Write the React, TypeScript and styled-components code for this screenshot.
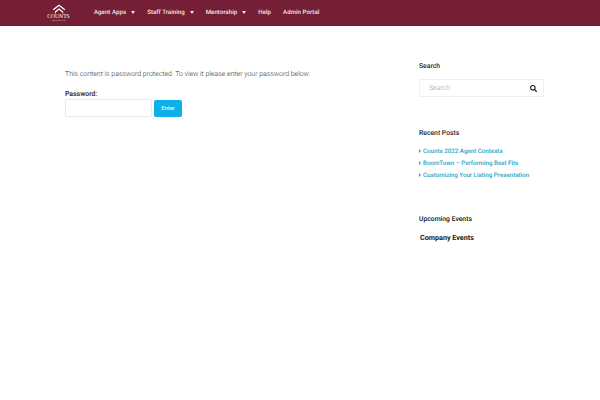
import React from "react";
import styled, { createGlobalStyle } from "styled-components";
import { FaSearch } from "react-icons/fa";

const GlobalStyle = createGlobalStyle`
  html, body {
    margin: 0;
    padding: 0;
    background: #fff;
    font-family: Roboto, "Liberation Sans", sans-serif;
    text-rendering: geometricPrecision;
    overflow: hidden;
  }
`;

const Page = styled.div`
  width: 600px;
  height: 400px;
  overflow: hidden;
`;

const Header = styled.header`
  height: 25px;
  background: #741f36;
  border-bottom: 1px solid #6a1a30;
  display: flex;
  align-items: center;
  padding-left: 47px;
`;

const Logo = styled.div`
  width: 23px;
  height: 25px;
  padding-top: 4px;
  box-sizing: border-box;
  display: flex;
  flex-direction: column;
  align-items: center;
  color: #fff;
`;

const LogoName = styled.span`
  font-family: "Liberation Serif", serif;
  font-size: 5.6px;
  line-height: 6px;
`;

const LogoSub = styled.span`
  font-family: "Liberation Sans", sans-serif;
  font-size: 2px;
  line-height: 2px;
  opacity: 0.7;
`;

const Nav = styled.nav`
  display: flex;
  align-items: center;
  margin-left: 24px;
  margin-top: -1px;
  gap: 12px;
`;

const NavItem = styled.a`
  display: flex;
  align-items: center;
  color: #f3e6ea;
  font-size: 6.1px;
  font-weight: 500;
  letter-spacing: 0.05px;
  white-space: nowrap;
`;

const Caret = styled.span`
  width: 0;
  height: 0;
  margin-left: 5px;
  border-left: 2.5px solid transparent;
  border-right: 2.5px solid transparent;
  border-top: 3px solid #f3e6ea;
`;

const Body = styled.div`
  display: flex;
  align-items: flex-start;
  padding-left: 65px;
`;

const Main = styled.main`
  width: 354px;
  padding-top: 43px;
`;

const Notice = styled.p`
  margin: 0;
  font-size: 6.95px;
  font-weight: 300;
  line-height: 11px;
  color: #333;
  white-space: nowrap;
`;

const Label = styled.label`
  display: block;
  margin-top: 9px;
  font-size: 6.9px;
  font-weight: 500;
  line-height: 10px;
  color: #222;
`;

const FormRow = styled.div`
  display: flex;
  align-items: center;
  gap: 2px;
`;

const PasswordInput = styled.input`
  box-sizing: border-box;
  width: 87px;
  height: 18px;
  padding: 0;
  border: 1px solid #e8e8e8;
  border-radius: 2px;
  background: #fff;
  outline: none;
`;

const Button = styled.button`
  width: 28px;
  height: 17px;
  padding: 0;
  border: none;
  border-radius: 2px;
  background: #0db1ea;
  color: #e4f6fd;
  font-family: Roboto, sans-serif;
  font-size: 5.8px;
  font-weight: 500;
`;

const Sidebar = styled.aside`
  width: 125px;
  padding-top: 35px;
`;

const WidgetTitle = styled.h4`
  margin: 0;
  font-size: 6.8px;
  font-weight: 500;
  line-height: 11px;
  color: #1d1d1d;
`;

const SearchBox = styled.div`
  box-sizing: border-box;
  display: flex;
  align-items: center;
  justify-content: space-between;
  height: 18px;
  margin-top: 7px;
  padding: 0 6px 0 9px;
  border: 1px solid #f0f0f0;
  color: #111;
`;

const Placeholder = styled.span`
  font-size: 6.9px;
  font-weight: 300;
  color: #999;
`;

const RecentTitle = styled(WidgetTitle)`
  margin-top: 31px;
`;

const PostList = styled.ul`
  list-style: none;
  margin: 6px 0 0;
  padding: 0;
  display: flex;
  flex-direction: column;
  gap: 1px;
`;

const PostItem = styled.li`
  display: flex;
  align-items: center;
  height: 11px;
  font-size: 6.2px;
  font-weight: 500;
  color: #2aa6c6;
  white-space: nowrap;
`;

const Arrow = styled.span`
  width: 0;
  height: 0;
  margin-right: 2px;
  border-top: 2px solid transparent;
  border-bottom: 2px solid transparent;
  border-left: 2px solid #2aa6c6;
`;

const EventsTitle = styled.h4`
  margin: 34px 0 0;
  font-family: Roboto, sans-serif;
  font-size: 6.8px;
  font-weight: 500;
  line-height: 11px;
  color: #111;
`;

const CompanyEvents = styled.h4`
  margin: 7px 0 0 1px;
  font-family: Roboto, sans-serif;
  font-size: 7.2px;
  font-weight: 700;
  line-height: 11px;
  color: #1a1a1a;
`;

const navItems = [
  { label: "Agent Apps", caret: true },
  { label: "Staff Training", caret: true },
  { label: "Mentorship", caret: true },
  { label: "Help", caret: false },
  { label: "Admin Portal", caret: false },
];

const posts = [
  "Counts 2022 Agent Contests",
  "BoomTown – Performing Best Fits",
  "Customizing Your Listing Presentation",
];

const App: React.FC = () => (
  <Page>
    <GlobalStyle />
    <Header>
      <Logo>
        <svg width="16" height="10" viewBox="0 0 18 12" fill="none" stroke="#fff">
          <path d="M2 7 L9 1.5 L16 7" strokeWidth="1.6" />
          <path d="M4.5 9.5 L9 6 L13.5 9.5" strokeWidth="1.4" />
          <path d="M4.5 9.5 V11.5 M13.5 9.5 V11.5" strokeWidth="1" />
        </svg>
        <LogoName>COUNTS</LogoName>
        <LogoSub>REAL ESTATE</LogoSub>
      </Logo>
      <Nav>
        {navItems.map((item) => (
          <NavItem key={item.label}>
            {item.label}
            {item.caret && <Caret />}
          </NavItem>
        ))}
      </Nav>
    </Header>
    <Body>
      <Main>
        <Notice>This content is password protected. To view it please enter your password below:</Notice>
        <Label>Password:</Label>
        <FormRow>
          <PasswordInput type="password" />
          <Button>Enter</Button>
        </FormRow>
      </Main>
      <Sidebar>
        <WidgetTitle>Search</WidgetTitle>
        <SearchBox>
          <Placeholder>Search</Placeholder>
          <FaSearch size={7} />
        </SearchBox>
        <RecentTitle>Recent Posts</RecentTitle>
        <PostList>
          {posts.map((post) => (
            <PostItem key={post}>
              <Arrow />
              {post}
            </PostItem>
          ))}
        </PostList>
        <EventsTitle>Upcoming Events</EventsTitle>
        <CompanyEvents>Company Events</CompanyEvents>
      </Sidebar>
    </Body>
  </Page>
);

export default App;
